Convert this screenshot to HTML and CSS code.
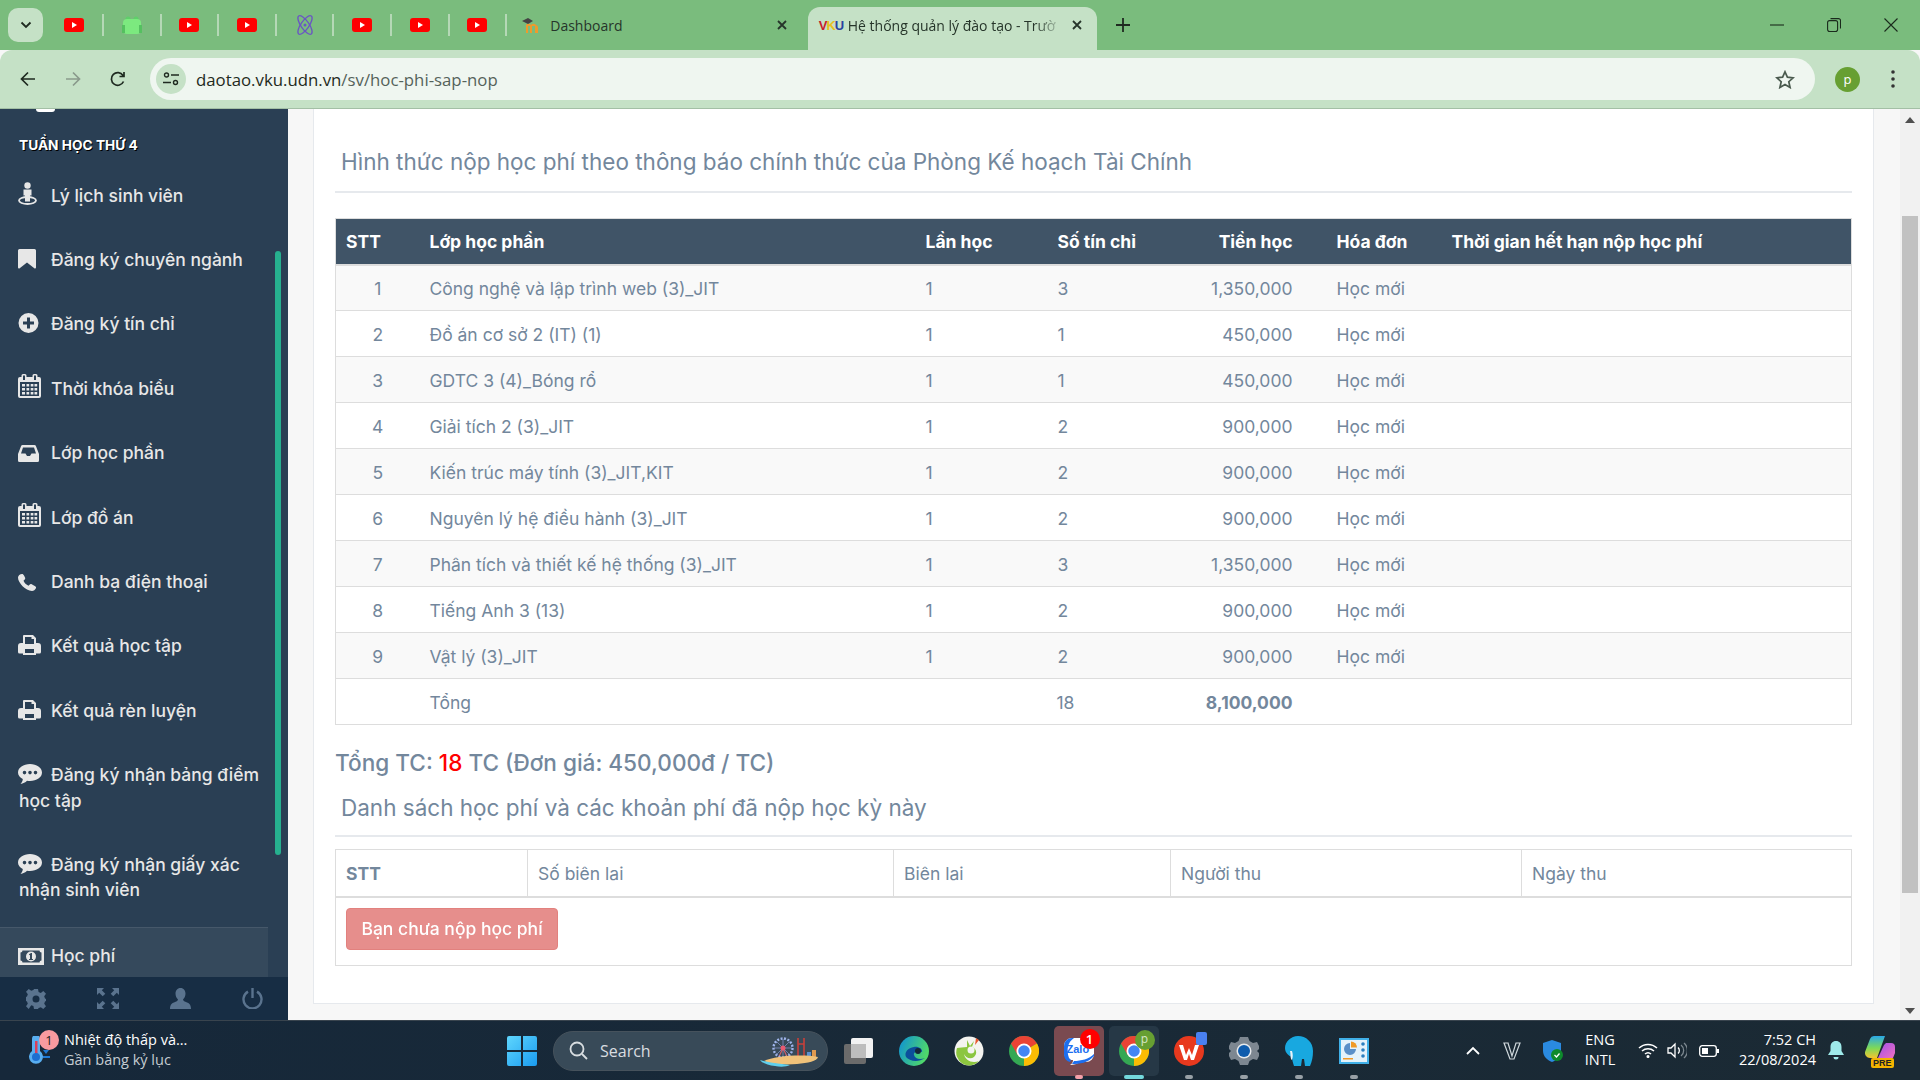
FILE: index.html
```html
<!DOCTYPE html>
<html lang="vi">

<head>
    <meta charset="UTF-8">
    <title>Hệ thống quản lý đào tạo</title>
    <link rel="stylesheet" href="styles.css">
</head>

<body>
    <!-- Icones reutilizados -->
    <svg class="defs" width="0" height="0">
        <symbol id="yt" viewBox="0 0 20 14"><rect width="20" height="14" rx="3" fill="#f00"/><path d="M8 4l5 3-5 3z" fill="#fff"/></symbol>
        <symbol id="close" viewBox="0 0 10 10"><path d="M1 1l8 8M9 1l-8 8" stroke="#26352a" stroke-width="1.800"/></symbol>
        <symbol id="chrome" viewBox="0 0 24 24"><circle cx="12" cy="12" r="12" fill="#34a853"/><path d="M12 12L22.4 6A12 12 0 0 0 1.6 6L6.8 15z" fill="#ea4335"/><path d="M12 12L22.4 6A12 12 0 0 1 12 24z" fill="#fbbc04"/><circle cx="12" cy="12" r="6" fill="#fff"/><circle cx="12" cy="12" r="4.6" fill="#4285f4"/></symbol>
        <symbol id="cal" viewBox="0 0 23 24"><path fill-rule="evenodd" d="M5 0h2a1.500 1.500 0 0 1 1.500 1.500V3h6V1.500A1.500 1.500 0 0 1 16 0h2a1.500 1.500 0 0 1 1.500 1.500V3H21a2 2 0 0 1 2 2v17a2 2 0 0 1-2 2H2a2 2 0 0 1-2-2V5a2 2 0 0 1 2-2h1.500V1.500A1.500 1.500 0 0 1 5 0zM5 1.500V6h2V1.500zM16 1.500V6h2V1.500zM2 8v14h19V8zM4 10h3v2.500H4zM8.500 10h2.700v2.500H8.500zM12.700 10h2.700v2.500h-2.700zM16.500 10h2.700v2.500h-2.700zM4 14h3v2.500H4zM8.500 14h2.700v2.500H8.500zM12.700 14h2.700v2.500h-2.700zM16.500 14h2.700v2.500h-2.700zM4 18h3v2.500H4zM8.500 18h2.700v2.500H8.500zM12.700 18h2.700v2.500h-2.700zM16.500 18h2.700v2.500h-2.700z" fill="currentColor"/></symbol>
        <symbol id="print" viewBox="0 0 23 20"><path fill-rule="evenodd" d="M6 0h9l3 3v5h2a3 3 0 0 1 3 3v6a1.500 1.500 0 0 1-1.500 1.500H18V20H5v-1.500H1.500A1.500 1.500 0 0 1 0 17v-6a3 3 0 0 1 3-3h2V1a1 1 0 0 1 1-1zM7 2v7h9V4h-2.500V2zM7 14v4h9v-4z" fill="currentColor"/></symbol>
        <symbol id="chat" viewBox="0 0 24 20"><path fill-rule="evenodd" d="M12 0c6.600 0 12 3.600 12 8.500S18.600 17 12 17c-1 0-2-.1-3-.3C7.500 18.300 5 19.600 2.500 20c1.200-1.300 2.200-3 2.300-5C1.900 13.500 0 11.200 0 8.500 0 3.600 5.400 0 12 0zM6.500 6.800a1.800 1.800 0 1 0 0 3.600 1.800 1.800 0 0 0 0-3.600zM12 6.800a1.800 1.800 0 1 0 0 3.600 1.800 1.800 0 0 0 0-3.600zM17.500 6.800a1.800 1.800 0 1 0 0 3.600 1.800 1.800 0 0 0 0-3.600z" fill="currentColor"/></symbol>
    </svg>

    <header class="chrome">
        <div class="tabstrip">
            <div class="tab-menu"><svg width="12" height="8" viewBox="0 0 12 8"><path d="M1.500 1.500L6 6l4.500-4.500" fill="none" stroke="#1f2a20" stroke-width="1.800"/></svg></div>
            <div class="pin"><svg width="20" height="14"><use href="#yt"/></svg></div>
            <div class="pin"><svg width="20" height="18" viewBox="0 0 20 18"><circle cx="6" cy="3" r="2.500" fill="#5fcf6a"/><circle cx="14" cy="3" r="2.500" fill="#5fcf6a"/><rect x="1" y="3" width="18" height="15" rx="4" fill="#7ce97f"/><rect x="0" y="9" width="3" height="8" fill="#55c060"/><rect x="17" y="9" width="3" height="8" fill="#55c060"/></svg></div>
            <div class="pin"><svg width="20" height="14"><use href="#yt"/></svg></div>
            <div class="pin"><svg width="20" height="14"><use href="#yt"/></svg></div>
            <div class="pin"><svg width="20" height="22" viewBox="0 0 20 22"><g fill="none" stroke="#6a55c4" stroke-width="1.300"><ellipse cx="10" cy="11" rx="4" ry="11" transform="rotate(-35 10 11)"/><ellipse cx="10" cy="11" rx="4" ry="11" transform="rotate(35 10 11)"/></g><circle cx="10" cy="11" r="1.500" fill="#6a55c4"/></svg></div>
            <div class="pin"><svg width="20" height="14"><use href="#yt"/></svg></div>
            <div class="pin"><svg width="20" height="14"><use href="#yt"/></svg></div>
            <div class="pin"><svg width="20" height="14"><use href="#yt"/></svg></div>
            <div class="tab">
                <svg class="tab-icon" width="18" height="16" viewBox="0 0 18 16"><path d="M4 16V8a3 3 0 0 1 5 0 3 3 0 0 1 5 0 3 3 0 0 1 2 2v6h-3V9H10v7H8V9H6v7z" fill="#ef9a2c"/><path d="M0 4l6-3 5 3-5 3z" fill="#444"/></svg>
                <span class="tab-title">Dashboard</span>
                <svg class="tab-x" width="10" height="10"><use href="#close"/></svg>
            </div>
            <div class="tab tab-active">
                <span class="vku"><b class="v">V</b><b class="k">K</b><b class="u">U</b></span>
                <span class="tab-title fade">Hệ thống quản lý đào tạo - Trườ</span>
                <svg class="tab-x" width="10" height="10"><use href="#close"/></svg>
            </div>
            <svg class="new-tab" width="14" height="14" viewBox="0 0 14 14"><path d="M7 0v14M0 7h14" stroke="#1f2a20" stroke-width="1.800"/></svg>
            <div class="win-btns">
                <svg width="14" height="14" viewBox="0 0 14 14"><path d="M0 7h14" stroke="#1a2a1c" stroke-width="1.100"/></svg>
                <svg width="14" height="14" viewBox="0 0 14 14" fill="none" stroke="#1a2a1c" stroke-width="1.100"><rect x=".6" y="2.600" width="10" height="11" rx="2"/><path d="M3.500.6h8a2 2 0 0 1 2 2v8"/></svg>
                <svg width="14" height="14" viewBox="0 0 14 14"><path d="M.5.5l13 13M13.500.5l-13 13" stroke="#1a2a1c" stroke-width="1.100"/></svg>
            </div>
        </div>
        <div class="toolbar">
            <div class="nav-btns">
                <svg width="16" height="16" viewBox="0 0 16 16"><path d="M15 8H2M8 1.500L1.500 8 8 14.500" fill="none" stroke="#1f2a20" stroke-width="1.700"/></svg>
                <svg width="16" height="16" viewBox="0 0 16 16"><path d="M1 8h13M8 1.500L14.500 8 8 14.500" fill="none" stroke="#8a9a8c" stroke-width="1.700"/></svg>
                <svg width="16" height="16" viewBox="0 0 16 16"><path d="M13.500 10.500A6.300 6.300 0 1 1 13 4.500M14 1v4.500H9.500" fill="none" stroke="#1f2a20" stroke-width="1.700"/></svg>
            </div>
            <div class="omnibox">
                <span class="site-btn"><svg width="16" height="14" viewBox="0 0 16 14" fill="none" stroke="#1f2a20" stroke-width="1.400"><circle cx="3.500" cy="3" r="2"/><path d="M8 3h8M0 10.500h8"/><circle cx="12.500" cy="10.500" r="2"/></svg></span>
                <span class="url">daotao.vku.udn.vn<span class="url-path">/sv/hoc-phi-sap-nop</span></span>
                <svg class="star" width="20" height="19" viewBox="0 0 20 19"><path d="M10 1.800l2.400 5.400 5.800.6-4.400 3.900 1.300 5.800L10 14.500l-5.100 3 1.300-5.800L1.800 7.800l5.800-.6z" fill="none" stroke="#4a5a4e" stroke-width="1.700"/></svg>
            </div>
            <span class="avatar">p</span>
            <svg class="kebab" width="4" height="18" viewBox="0 0 4 18"><circle cx="2" cy="2" r="1.800" fill="#333"/><circle cx="2" cy="9" r="1.800" fill="#333"/><circle cx="2" cy="16" r="1.800" fill="#333"/></svg>
        </div>
    </header>

    <main class="main">
        <aside class="sidebar">
            <div class="side-scroll">
                <div class="side-arc"></div>
                <h3 class="side-heading">TUẦN HỌC THỨ 4</h3>
                <ul class="side-menu">
                    <li><span class="ico"><svg width="19" height="23" viewBox="0 0 19 23"><circle cx="9.500" cy="3.500" r="3.200" fill="currentColor"/><path d="M5.500 7.500h8v6h-1.500v6h-5v-6H5.500z" fill="currentColor"/><ellipse cx="9.500" cy="18.500" rx="8.500" ry="3.500" fill="none" stroke="currentColor" stroke-width="1.800"/></svg></span>Lý lịch sinh viên</li>
                    <li><span class="ico"><svg width="18" height="20" viewBox="0 0 18 20"><path d="M1.500 0h15A1.500 1.500 0 0 1 18 1.500v17a1 1 0 0 1-1.700.7L9 13.500l-7.300 5.700A1 1 0 0 1 0 18.500v-17A1.500 1.500 0 0 1 1.500 0z" fill="currentColor"/></svg></span>Đăng ký chuyên ngành</li>
                    <li><span class="ico"><svg width="21" height="20" viewBox="0 0 20 20"><path fill-rule="evenodd" d="M10 0a10 10 0 1 1 0 20 10 10 0 0 1 0-20zM8.500 4.500v4h-4v3h4v4h3v-4h4v-3h-4v-4z" fill="currentColor"/></svg></span>Đăng ký tín chỉ</li>
                    <li><span class="ico"><svg width="23" height="24"><use href="#cal"/></svg></span>Thời khóa biểu</li>
                    <li><span class="ico"><svg width="21" height="17" viewBox="0 0 21 17"><path fill-rule="evenodd" d="M4.500 0h12a1.500 1.500 0 0 1 1.300.8L21 9v6.500a1.500 1.500 0 0 1-1.500 1.500h-18A1.500 1.500 0 0 1 0 15.500V9L3.200.8A1.500 1.500 0 0 1 4.500 0zM5 2.500L3 8.500h4.500L9 11h3l1.500-2.500H18l-2-6z" fill="currentColor"/></svg></span>Lớp học phần</li>
                    <li><span class="ico"><svg width="23" height="24"><use href="#cal"/></svg></span>Lớp đồ án</li>
                    <li><span class="ico"><svg width="19" height="17" viewBox="0 0 19 17"><path d="M4 0c1 0 1.500.6 2 1.500l1 2c.4.900.2 1.500-.5 2.200l-1 1c.8 2 2.800 4 5 5l1-1c.7-.7 1.400-.9 2.200-.4l3.500 2c.9.500 1.100 1.200.7 2-.7 1.500-2.200 2.700-3.900 2.700C7.500 16.500 0 9 0 3.500 0 1.800 2 0 4 0z" fill="currentColor"/></svg></span>Danh bạ điện thoại</li>
                    <li><span class="ico"><svg width="23" height="20"><use href="#print"/></svg></span>Kết quả học tập</li>
                    <li><span class="ico"><svg width="23" height="20"><use href="#print"/></svg></span>Kết quả rèn luyện</li>
                    <li><span class="ico"><svg width="24" height="20"><use href="#chat"/></svg></span>Đăng ký nhận bảng điểm học tập</li>
                    <li><span class="ico"><svg width="24" height="20"><use href="#chat"/></svg></span>Đăng ký nhận giấy xác nhận sinh viên</li>
                    <li class="active"><span class="ico"><svg width="26" height="17" viewBox="0 0 26 17"><path fill-rule="evenodd" d="M0 0h26v17H0zM4.500 2.500a2 2 0 0 1-2 2v8a2 2 0 0 1 2 2h17a2 2 0 0 1 2-2v-8a2 2 0 0 1-2-2zM13 3.500a5 5 0 1 1 0 10 5 5 0 0 1 0-10zM13 5l-2 1.200v1l1-.5V11h-1v1h4v-1h-1V5z" fill="currentColor"/></svg></span>Học phí</li>
                </ul>
            </div>
            <div class="side-thumb"></div>
            <div class="side-footer">
                <svg width="20" height="20" viewBox="0 0 20 20"><path fill-rule="evenodd" d="M8 0h4l.6 3 2.200.9L17.300 2 20 4.800l-1.800 2.500.8 2.200 1 .5v2l-1 .5-.8 2.200 1.800 2.500L17.300 20l-2.500-1.800-2.200.8L12 20H8l-.6-3-2.200-.8L2.700 20 0 17.200l1.800-2.500L1 12.500l-1-.5V8l1-.5.8-2.200L0 2.800 2.700 0l2.500 1.800L7.400 1zM10 6.500a3.500 3.500 0 1 0 0 7 3.500 3.500 0 0 0 0-7z" fill="currentColor"/></svg>
                <svg width="22" height="21" viewBox="0 0 22 21" fill="currentColor"><path d="M0 0h7L4.800 2.200l3.500 3.500-2.600 2.600-3.500-3.500L0 7zM22 0v7l-2.200-2.200-3.500 3.500-2.600-2.600 3.500-3.500L15 0zM0 21v-7l2.200 2.200 3.500-3.500 2.600 2.600-3.500 3.500L7 21zM22 21h-7l2.200-2.200-3.500-3.500 2.600-2.600 3.500 3.500L22 14z"/></svg>
                <svg width="21" height="21" viewBox="0 0 21 21"><path d="M10.500 0c3.200 0 5 2.500 5 5.500 0 2.500-1 4.500-2.500 6 .3 1.300 1 1.800 3 2.500 2.500 1 5 2 5 7H0c0-5 2.500-6 5-7 2-.7 2.700-1.200 3-2.500-1.500-1.500-2.500-3.500-2.500-6 0-3 1.800-5.500 5-5.500z" fill="currentColor"/></svg>
                <svg width="21" height="21" viewBox="0 0 21 21" fill="none" stroke="currentColor" stroke-width="2.400"><path d="M6 3.600a9 9 0 1 0 9 0"/><path d="M10.500 0v10"/></svg>
            </div>
        </aside>

        <section class="content">
            <div class="card">
                <h2 class="panel-title">Hình thức nộp học phí theo thông báo chính thức của Phòng Kế hoạch Tài Chính</h2>
                <table class="fee-table">
                    <colgroup>
                        <col class="c-stt"><col class="c-name"><col class="c-times"><col class="c-cred"><col class="c-money"><col class="c-bill"><col>
                    </colgroup>
                    <thead>
                        <tr><th>STT</th><th>Lớp học phần</th><th>Lần học</th><th>Số tín chỉ</th><th class="num">Tiền học</th><th class="bill">Hóa đơn</th><th>Thời gian hết hạn nộp học phí</th></tr>
                    </thead>
                    <tbody>
                        <tr><td class="idx">1</td><td>Công nghệ và lập trình web (3)_JIT</td><td>1</td><td>3</td><td class="num">1,350,000</td><td class="bill">Học mới</td><td></td></tr>
                        <tr><td class="idx">2</td><td>Đồ án cơ sở 2 (IT) (1)</td><td>1</td><td>1</td><td class="num">450,000</td><td class="bill">Học mới</td><td></td></tr>
                        <tr><td class="idx">3</td><td>GDTC 3 (4)_Bóng rổ</td><td>1</td><td>1</td><td class="num">450,000</td><td class="bill">Học mới</td><td></td></tr>
                        <tr><td class="idx">4</td><td>Giải tích 2 (3)_JIT</td><td>1</td><td>2</td><td class="num">900,000</td><td class="bill">Học mới</td><td></td></tr>
                        <tr><td class="idx">5</td><td>Kiến trúc máy tính (3)_JIT,KIT</td><td>1</td><td>2</td><td class="num">900,000</td><td class="bill">Học mới</td><td></td></tr>
                        <tr><td class="idx">6</td><td>Nguyên lý hệ điều hành (3)_JIT</td><td>1</td><td>2</td><td class="num">900,000</td><td class="bill">Học mới</td><td></td></tr>
                        <tr><td class="idx">7</td><td>Phân tích và thiết kế hệ thống (3)_JIT</td><td>1</td><td>3</td><td class="num">1,350,000</td><td class="bill">Học mới</td><td></td></tr>
                        <tr><td class="idx">8</td><td>Tiếng Anh 3 (13)</td><td>1</td><td>2</td><td class="num">900,000</td><td class="bill">Học mới</td><td></td></tr>
                        <tr><td class="idx">9</td><td>Vật lý (3)_JIT</td><td>1</td><td>2</td><td class="num">900,000</td><td class="bill">Học mới</td><td></td></tr>
                        <tr><td></td><td>Tổng</td><td></td><td class="sum-cred">18</td><td class="num strong">8,100,000</td><td></td><td></td></tr>
                    </tbody>
                </table>
                <p class="total">Tổng TC: <span class="red">18</span> TC (Đơn giá: 450,000đ / TC)</p>
                <h2 class="panel-title second">Danh sách học phí và các khoản phí đã nộp học kỳ này</h2>
                <table class="paid-table">
                    <colgroup>
                        <col class="p-stt"><col class="p-no"><col class="p-rec"><col class="p-who"><col>
                    </colgroup>
                    <thead>
                        <tr><th class="strong">STT</th><th>Số biên lai</th><th>Biên lai</th><th>Người thu</th><th>Ngày thu</th></tr>
                    </thead>
                    <tbody>
                        <tr><td colspan="5"><button class="btn-unpaid" disabled>Bạn chưa nộp học phí</button></td></tr>
                    </tbody>
                </table>
            </div>
        </section>

        <div class="scrollbar">
            <span class="arrow-up"></span>
            <div class="thumb"></div>
            <span class="arrow-down"></span>
        </div>
    </main>

    <footer class="taskbar">
        <div class="weather">
            <span class="weather-icon">
                <svg width="24" height="28" viewBox="0 0 24 28"><path d="M5 3a4 4 0 0 1 8 0v12a7 7 0 1 1-8 0z" fill="#58aef0"/><rect x="8" y="5" width="2.500" height="14" fill="#d8405a"/><circle cx="9" cy="21" r="4" fill="#1d6fd0"/><path d="M16 14h6l-3 4zM16 20h7v2h-7z" fill="#1f7ad6"/></svg>
                <span class="weather-badge">1</span>
            </span>
            <div class="weather-text">
                <span>Nhiệt độ thấp và...</span>
                <span class="dim">Gần bằng kỷ lục</span>
            </div>
        </div>
        <div class="task-icons">
            <span class="task"><svg width="30" height="30" viewBox="0 0 30 30"><defs><linearGradient id="win" x1="0" y1="0" x2="1" y2="1"><stop offset="0" stop-color="#5fd6fd"/><stop offset="1" stop-color="#1a9bf0"/></linearGradient></defs><path d="M0 2a2 2 0 0 1 2-2h12v14H0zM16 0h12a2 2 0 0 1 2 2v12H16zM0 16h14v14H2a2 2 0 0 1-2-2zM16 16h14v12a2 2 0 0 1-2 2H16z" fill="url(#win)"/></svg></span>
            <div class="search">
                <svg width="19" height="19" viewBox="0 0 19 19" fill="none" stroke="#d8dde0" stroke-width="1.800"><circle cx="8" cy="8" r="6.500"/><path d="M13 13l5 5"/></svg>
                <span>Search</span>
                <svg class="search-art" width="60" height="32" viewBox="0 0 60 32"><path d="M23 13l-6 13M23 13l6 13" stroke="#d0606a" stroke-width="1.200"/><circle cx="23" cy="13" r="9.500" fill="none" stroke="#9fb4ea" stroke-width="2.400" stroke-dasharray="2 1.500"/><path d="M14 13h18M23 4v18M16.500 6.500l13 13M29.500 6.500l-13 13" stroke="#8a98d0" stroke-width=".7"/><circle cx="23" cy="13" r="2.500" fill="#e85a70"/><path d="M38 3v19M44 3v19M38 9h6" stroke="#c8403a" stroke-width="1.600"/><rect x="47" y="17" width="4" height="5" fill="#5a8fd0"/><rect x="52" y="15" width="4" height="7" fill="#e09a50"/><path d="M4 26c10-5 38-7 54-4-1 4-10 6-21 7C24 30 10 29 4 26z" fill="#f0c27a"/><path d="M0 25c6 2 18 4 30 5-4 2-10 2-15 1C8 30 2 28 0 25z" fill="#5fd0ee"/></svg>
            </div>
            <span class="task"><svg width="30" height="30" viewBox="0 0 30 30"><rect y="8" width="22" height="20" rx="2" fill="#6b6b6b"/><rect x="7" y="2" width="22" height="20" rx="2" fill="#f2f2f2"/><rect x="7" y="8" width="15" height="14" fill="#bdbdbd"/></svg></span>
            <span class="task"><svg width="30" height="30" viewBox="0 0 30 30"><defs><linearGradient id="edge" x1="0" y1="0" x2="1" y2=".4"><stop offset="0" stop-color="#0c8fd8"/><stop offset="1" stop-color="#4fd86a"/></linearGradient></defs><circle cx="15" cy="15" r="15" fill="url(#edge)"/><path d="M7 21c3 4 12 6 19 1-5 2-10 1-11-3-1-3 4-5 8-3 1-3-4-6-8-5-6 1-10 5-8 10z" fill="#0b4f9c"/><circle cx="19" cy="15" r="3" fill="#14283a"/></svg></span>
            <span class="task"><svg width="30" height="30" viewBox="0 0 30 30"><circle cx="15" cy="15" r="14.500" fill="#f4f4f0"/><path d="M3 12a13 13 0 0 0 22 13c-7 3-14-1-15-7 1 3 6 6 10 3 4-4 2-9-2-10l2-6-4 5-3-6 0 7c-4 0-7 1-10 1z" fill="#8cc63f"/><circle cx="17" cy="14" r="3.500" fill="#f4f4f0"/><path d="M22 2l3 2-4 5z" fill="#e85a30"/></svg></span>
            <span class="task"><svg width="30" height="30"><use href="#chrome"/></svg></span>
            <span class="task task-alert">
                <svg width="30" height="30" viewBox="0 0 30 30"><path d="M8 2h14a8 8 0 0 1 8 8v8a8 8 0 0 1-8 8h-6c-3 2-6 3-10 3 2-1 3-3 3-5A8 8 0 0 1 0 18v-8a8 8 0 0 1 8-8z" fill="#fff"/><path d="M0 10a8 8 0 0 1 8-8h2C4 6 2 13 5 22l2 2-1 2C2 25 0 22 0 18z" fill="#1d6ff0"/><path d="M8 28c8 0 16-1 22-8v-2c-5 5-13 7-20 7z" fill="#1d6ff0"/></svg>
                <span class="zalo">Zalo</span>
                <span class="zalo-badge">1</span>
                <i class="dot pink"></i>
            </span>
            <span class="task task-on">
                <svg width="30" height="30"><use href="#chrome"/></svg>
                <span class="task-p">p</span>
                <i class="dot teal"></i>
            </span>
            <span class="task">
                <svg width="30" height="30" viewBox="0 0 30 30"><circle cx="15" cy="15" r="15" fill="#e8391e"/><path d="M5 9h4l3 10 3-7 3 7 3-10h4l-5 15h-3l-2-6-2 6h-3z" fill="#fff"/></svg>
                <span class="task-w"></span>
                <i class="dot"></i>
            </span>
            <span class="task"><svg width="30" height="30" viewBox="0 0 30 30"><path fill-rule="evenodd" d="M11 1h8l1.500 4 3.500 2 4-1 3 6-3 3 3 3-3 6-4-1-3.500 2-1.500 4h-8l-1.500-4-3.500-2-4 1-3-6 3-3-3-3 3-6 4 1 3.500-2z" fill="#7d8791"/><circle cx="15" cy="15" r="7.500" fill="#e6e9ec"/><circle cx="15" cy="15" r="6" fill="#0e5cad"/></svg><i class="dot"></i></span>
            <span class="task"><svg width="28" height="30" viewBox="0 0 28 30"><path d="M13 0c8 0 15 6 15 15 0 6-1 10-3 15h-5l-1-7h-2l-1 7H9c-1-3-2-6-2-9-3-1-7-4-7-9C0 6 6 0 13 0z" fill="#18a8e0"/><path d="M5 15c1 4 0 8 2 9 1-3 1-6 0-9z" fill="#e8f4fa"/></svg><i class="dot"></i></span>
            <span class="task"><svg width="30" height="26" viewBox="0 0 30 26"><rect width="30" height="26" fill="#40b0e8"/><rect x="2" y="2" width="26" height="22" fill="#e4f2fb"/><path d="M11 5a6 6 0 1 0 6 6h-6z" fill="#5a8fc8"/><path d="M12 3.500a6 6 0 0 1 6 6h-6z" fill="#f09a28"/><circle cx="24" cy="6" r="1.800" fill="#2a7ec0"/><circle cx="24" cy="12" r="1.800" fill="#2a7ec0"/><circle cx="24" cy="18" r="1.800" fill="#2a7ec0"/><rect x="4" y="20" width="10" height="1.500" fill="#f09a28"/></svg><i class="dot"></i></span>
        </div>
        <div class="tray">
            <svg class="t-chev" width="14" height="9" viewBox="0 0 14 9"><path d="M1 8l6-6 6 6" fill="none" stroke="#fff" stroke-width="1.800"/></svg>
            <svg class="t-v" width="18" height="18" viewBox="0 0 18 18"><path d="M1 1h4l4 13 4-13h4L11 17H7zM5 1l4 13" fill="none" stroke="#cfd8dc" stroke-width="1.200"/></svg>
            <svg class="t-shield" width="20" height="22" viewBox="0 0 20 22"><path d="M9 0l9 3v8c0 5-4 9-9 11-5-2-9-6-9-11V3z" fill="#2a8ae0"/><circle cx="14" cy="15" r="6" fill="#0e8a2c"/><path d="M11.500 15l2 2 3-3.500" fill="none" stroke="#fff" stroke-width="1.300"/></svg>
            <div class="lang"><span>ENG</span><span>INTL</span></div>
            <svg class="t-wifi" width="20" height="15" viewBox="0 0 20 15" fill="none" stroke="#fff" stroke-width="1.500"><path d="M1 5a13 13 0 0 1 18 0M4 8a9 9 0 0 1 12 0M7 11a4.500 4.500 0 0 1 6 0"/><circle cx="10" cy="13.500" r=".8" fill="#fff"/></svg>
            <svg class="t-sound" width="20" height="17" viewBox="0 0 20 17" fill="none" stroke="#fff" stroke-width="1.300"><path d="M1 6v5h3l4 4V2L4 6z"/><path d="M11 5.500a4 4 0 0 1 0 6"/><path d="M14 3a7 7 0 0 1 0 11M17 1a10 10 0 0 1 0 15" stroke="#7c8890"/></svg>
            <svg class="t-batt" width="20" height="12" viewBox="0 0 20 12"><rect x=".7" y=".7" width="16.600" height="10.600" rx="2.500" fill="none" stroke="#fff" stroke-width="1.300"/><rect x="3" y="3" width="6" height="6" fill="#fff"/><rect x="18" y="4" width="2" height="4" fill="#fff"/></svg>
            <div class="clock"><span>7:52 CH</span><span>22/08/2024</span></div>
            <svg class="t-bell" width="16" height="19" viewBox="0 0 16 19"><path d="M8 0c3.500 0 5.500 2.500 5.500 6v4l2.500 4H0l2.500-4V6C2.500 2.500 4.500 0 8 0z" fill="#9eeaea"/><path d="M5.500 16h5a2.500 2.500 0 0 1-5 0z" fill="#9eeaea"/></svg>
            <span class="copilot">
                <svg width="30" height="24" viewBox="0 0 30 24"><defs><linearGradient id="cop" x1="0" y1="0" x2="0" y2="1"><stop offset="0" stop-color="#2aa8e8"/><stop offset=".55" stop-color="#7ed957"/><stop offset="1" stop-color="#f4c430"/></linearGradient><linearGradient id="cop2" x1="0" y1="0" x2="1" y2="1"><stop offset="0" stop-color="#a050e8"/><stop offset="1" stop-color="#f070c0"/></linearGradient></defs><path d="M10 0h10L12 22H5a5 5 0 0 1-4.800-6.500L5 3a5 5 0 0 1 5-3z" fill="url(#cop)"/><path d="M21 7h5a4 4 0 0 1 4 4v6l-2 5H13l6-13z" fill="url(#cop2)"/></svg>
                <b class="pre">PRE</b>
            </span>
        </div>
    </footer>
</body>

</html>
```
FILE: styles.css
```css
* {
    box-sizing: border-box;
}

html,
body {
    height: 1080px;
    margin: 0;
    overflow: hidden;
}

body {
    display: flex;
    flex-direction: column;
    font-family: Inter, "Noto Sans", sans-serif;
    color: #73879c;
    background: #f7f7f7;
}

.defs {
    position: absolute;
}

/* Barra do navegador */
.chrome {
    flex: none;
    font-family: "Open Sans", "Noto Sans", sans-serif;
}

.tabstrip {
    display: flex;
    align-items: center;
    height: 50px;
    padding-left: 8px;
    background: #7abc7d;
}

.tab-menu {
    display: flex;
    align-items: center;
    justify-content: center;
    width: 35px;
    height: 34px;
    margin-right: 3.500px;
    border-radius: 10px;
    background: #c5e1c6;
}

.pin {
    display: flex;
    align-items: center;
    justify-content: center;
    flex: none;
    width: 57.600px;
    height: 22px;
    border-right: 2px solid #b5d8b6;
}

.tab {
    display: flex;
    align-items: center;
    flex: none;
    width: 300.500px;
    height: 50px;
    padding: 0 21px 0 15px;
    font-size: 14px;
    color: #26352a;
}

.tab-icon {
    flex: none;
    margin-right: 10px;
}

.tab-title {
    flex: 1;
    overflow: hidden;
    white-space: nowrap;
}

.tab-x {
    flex: none;
}

.tab-active {
    width: 289px;
    height: 43px;
    margin-top: 7px;
    padding: 0 15px 7px 11px;
    border-radius: 12px 12px 0 0;
    background: #c5e1c6;
}

.fade {
    -webkit-mask-image: linear-gradient(90deg, #000 86%, transparent);
    mask-image: linear-gradient(90deg, #000 86%, transparent);
    margin-right: 8px;
}

.vku {
    flex: none;
    width: 29px;
    font: 700 13px "Liberation Sans", sans-serif;
    letter-spacing: -1px;
}

.vku .v {
    color: #c8202c;
}

.vku .k {
    color: #e8c020;
}

.vku .u {
    color: #2840a0;
}

.new-tab {
    flex: none;
    margin-left: 19px;
}

.win-btns {
    display: flex;
    gap: 43px;
    margin-left: auto;
    padding-right: 22px;
}

.toolbar {
    display: flex;
    align-items: center;
    height: 59px;
    border-bottom: 1px solid #a3bfa5;
    border-radius: 12px 12px 0 0;
    background: #c5e1c6;
}

.nav-btns {
    display: flex;
    gap: 29px;
    width: 150px;
    padding-left: 20px;
}

.omnibox {
    display: flex;
    align-items: center;
    width: 1665px;
    height: 42px;
    padding-left: 6px;
    border-radius: 21px;
    background: #eff6f0;
}

.site-btn {
    display: flex;
    align-items: center;
    justify-content: center;
    width: 30px;
    height: 30px;
    margin-right: 10px;
    border-radius: 50%;
    background: #c5e1c6;
}

.url {
    font-size: 16.800px;
    color: #1f2a20;
}

.url-path {
    color: #55625a;
}

.star {
    margin-left: auto;
    margin-right: 20px;
}

.avatar {
    display: flex;
    align-items: center;
    justify-content: center;
    width: 25px;
    height: 25px;
    margin-left: 20px;
    border-radius: 50%;
    background: #679f32;
    color: #fff;
    font-size: 13px;
}

.kebab {
    margin-left: 31px;
}

/* Area principal */
.main {
    display: flex;
    flex: 1;
    min-height: 0;
}

.sidebar {
    position: relative;
    display: flex;
    flex-direction: column;
    flex: none;
    width: 288px;
    background: #2a3f54;
    color: #e7e7e7;
}

.side-scroll {
    flex: 1;
    overflow: hidden;
}

.side-arc {
    width: 19px;
    height: 3px;
    margin-left: 36px;
    border-radius: 0 0 10px 10px;
    background: #fff;
}

.side-heading {
    margin: 23px 0 0 19px;
    font-size: 13.700px;
    line-height: 20px;
    font-weight: 700;
    color: #fff;
    text-shadow: 1px 1px #000;
}

.side-menu {
    width: 268px;
    margin: 0;
    padding: 8px 0 0;
    list-style: none;
}

.side-menu li {
    padding: 19.500px 6px 19.500px 19px;
    font-size: 17.500px;
    font-weight: 500;
    line-height: 25.400px;
}

.side-menu li.active {
    margin-top: 5px;
    padding-top: 14.500px;
    border-top: 1px solid #46586a;
    background: #35495c;
}

.ico {
    display: inline-flex;
    align-items: center;
    width: 33px;
    height: 20px;
    margin-left: -1px;
    vertical-align: -3px;
}

.side-thumb {
    position: absolute;
    top: 142px;
    left: 275px;
    width: 6px;
    height: 604px;
    border-radius: 3px;
    background: #26b08f;
}

.side-footer {
    display: flex;
    flex: none;
    align-items: center;
    justify-content: space-around;
    height: 43px;
    background: #172d44;
    color: #5a738e;
}

.content {
    flex: 1;
    min-width: 0;
    padding: 0 26px 16px 25px;
}

.card {
    height: 100%;
    padding: 0 21px;
    border: 1px solid #e6e9ed;
    border-top: 0;
    background: #fff;
}

.panel-title {
    margin: 0;
    padding: 35px 6px 11px;
    border-bottom: 2px solid #e6e9ed;
    font-size: 22.500px;
    font-weight: 400;
    line-height: 36px;
}

.panel-title.second {
    padding: 0 6px 10px;
    line-height: 34px;
}

table {
    width: 1517px;
    table-layout: fixed;
    border-collapse: collapse;
    font-size: 17.500px;
}

th,
td {
    padding: 0 10px;
    font-weight: 400;
    text-align: left;
}

.fee-table {
    margin-top: 25px;
    border: 1px solid #ddd;
}

.fee-table th {
    height: 46px;
    background: #405467;
    color: #fff;
    font-weight: 700;
    border-bottom: 2px solid #ddd;
}

.fee-table td {
    height: 46px;
    padding-top: 1px;
    border-top: 1px solid #ddd;
}

.fee-table tbody tr:nth-child(odd) {
    background: #f9f9f9;
}

.fee-table tbody tr:last-child {
    background: #fff;
}

.c-stt {
    width: 84px;
}

.c-name {
    width: 496px;
}

.c-times {
    width: 132px;
}

.c-cred {
    width: 125px;
}

.c-money {
    width: 130px;
}

.c-bill {
    width: 139px;
}

.idx {
    text-align: center;
}

.fee-table td.num,
.fee-table th.num {
    text-align: right;
}

.bill {
    padding-left: 34px;
}

.strong {
    font-weight: 700;
}

.sum-cred {
    padding-left: 9px;
}

.total {
    margin: 24px 0 0;
    font-size: 22.600px;
    font-weight: 500;
    line-height: 28px;
}

.red {
    color: #f00;
}

.total + .panel-title.second {
    margin-top: 14px;
}

.paid-table {
    margin-top: 12px;
    border: 1px solid #ddd;
}

.paid-table th {
    height: 47px;
    padding-top: 1px;
    border: 1px solid #ddd;
    border-bottom-width: 2px;
}

.paid-table th.strong {
    font-weight: 700;
}

.paid-table td {
    height: 69px;
    padding: 10px;
    vertical-align: top;
}

.p-stt {
    width: 192px;
}

.p-no {
    width: 366px;
}

.p-rec {
    width: 277px;
}

.p-who {
    width: 351px;
}

.btn-unpaid {
    display: block;
    width: 212px;
    height: 42px;
    border: 1px solid #d43f3a;
    border-radius: 4px;
    background: #d9534f;
    color: #fff;
    font: 500 17.500px Inter, sans-serif;
    opacity: 0.65;
}

/* Barra de rolagem da pagina */
.scrollbar {
    position: relative;
    flex: none;
    width: 20px;
    background: #f1f1f1;
}

.thumb {
    position: absolute;
    top: 107px;
    left: 2px;
    width: 16px;
    height: 677px;
    background: #c1c1c1;
}

.arrow-up,
.arrow-down {
    position: absolute;
    left: 5px;
    width: 0;
    height: 0;
    border-left: 5px solid transparent;
    border-right: 5px solid transparent;
}

.arrow-up {
    top: 8px;
    border-bottom: 6px solid #505050;
}

.arrow-down {
    bottom: 6px;
    border-top: 6px solid #505050;
}

/* Barra de tarefas */
.taskbar {
    display: flex;
    flex: none;
    align-items: center;
    height: 60px;
    border-top: 1px solid #39444e;
    background: linear-gradient(90deg, #16283a, #1b2a34);
    color: #fff;
    font-family: "Open Sans", "Noto Sans", sans-serif;
}

.weather {
    display: flex;
    flex: none;
    align-items: center;
    width: 494px;
    padding-left: 27px;
    font-size: 14.500px;
}

.weather-icon {
    position: relative;
    width: 37px;
    height: 30px;
}

.weather-badge {
    position: absolute;
    top: -6px;
    left: 12px;
    width: 20px;
    height: 20px;
    border-radius: 50%;
    background: #f99aa0;
    color: #222;
    font-size: 13px;
    line-height: 20px;
    text-align: center;
}

.weather-text {
    display: flex;
    flex-direction: column;
    margin-top: -2px;
    line-height: 20px;
}

.dim {
    color: #c5ccd2;
}

.task-icons {
    display: flex;
    flex: none;
    align-items: center;
}

.task {
    position: relative;
    display: flex;
    flex: none;
    align-items: center;
    justify-content: center;
    width: 55px;
    height: 50px;
}

.task-alert,
.task-on {
    width: 50px;
    margin: 0 2.500px;
    border-radius: 5px;
}

.task-alert {
    background: #7a4a50;
}

.task-on {
    background: #263846;
}

.zalo {
    position: absolute;
    top: 17px;
    left: 13px;
    color: #1d6ff0;
    font: 700 11px "Liberation Sans", sans-serif;
}

.zalo-badge {
    position: absolute;
    top: 3px;
    right: 4px;
    width: 20px;
    height: 20px;
    border-radius: 50%;
    background: #f00;
    font-size: 13px;
    font-weight: 600;
    line-height: 20px;
    text-align: center;
}

.task-p {
    position: absolute;
    top: 4px;
    right: 4px;
    width: 20px;
    height: 20px;
    border-radius: 50%;
    background: #679f32;
    color: #d8e8c8;
    font-size: 12px;
    line-height: 18px;
    text-align: center;
}

.task-w {
    position: absolute;
    top: 6px;
    right: 9px;
    width: 11px;
    height: 13px;
    border-radius: 2px;
    background: #4a80f0;
}

.dot {
    position: absolute;
    bottom: -3px;
    left: 50%;
    width: 8px;
    height: 4px;
    margin-left: -4px;
    border-radius: 2px;
    background: #98a0a6;
}

.dot.pink {
    background: #f4a0a8;
}

.dot.teal {
    width: 20px;
    margin-left: -10px;
    background: #73d8dc;
}

.search {
    display: flex;
    flex: none;
    align-items: center;
    width: 275px;
    height: 40px;
    margin: 0 3px 0 4px;
    padding: 0 7px 0 15px;
    border: 1px solid #46525c;
    border-radius: 20px;
    background: #384a58;
    color: #d8dde0;
    font-size: 16px;
}

.search span {
    margin-left: 12px;
}

.search-art {
    margin-left: auto;
}

.tray {
    display: flex;
    flex: 1;
    align-items: center;
    height: 100%;
    font-size: 14.500px;
}

.t-chev {
    margin-left: 85px;
}

.t-v {
    margin-left: 23px;
}

.t-shield {
    margin-left: 22px;
}

.lang {
    display: flex;
    flex-direction: column;
    align-items: center;
    width: 40px;
    margin-left: 17px;
    margin-top: -2px;
    line-height: 20px;
}

.t-wifi {
    margin-left: 18px;
}

.t-sound {
    margin-left: 9px;
}

.t-batt {
    margin-left: 12px;
}

.clock {
    display: flex;
    flex-direction: column;
    align-items: flex-end;
    width: 97px;
    margin-top: -2px;
    line-height: 20px;
}

.t-bell {
    margin-left: 12px;
}

.copilot {
    position: relative;
    display: block;
    width: 30px;
    height: 30px;
    margin-left: 21px;
}

.pre {
    position: absolute;
    left: 6px;
    bottom: -2px;
    padding: 0 2px;
    border-radius: 2px;
    background: #f4b400;
    color: #222;
    font: 700 9px "Liberation Sans", sans-serif;
    line-height: 10px;
}
```
